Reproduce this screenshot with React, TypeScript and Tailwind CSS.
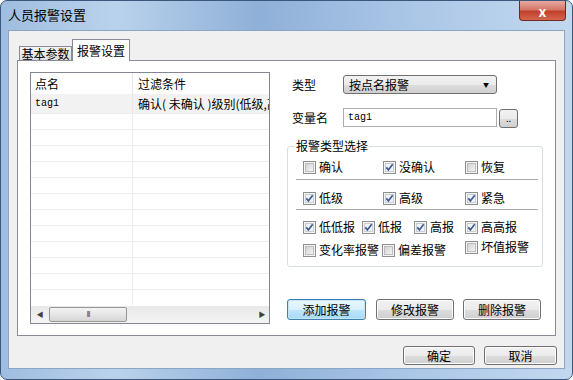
import React from 'react';

const Check = ({ checked }: { checked?: boolean }) => (
  <svg width="13" height="13" viewBox="0 0 13 13" className="shrink-0">
    <defs>
      <linearGradient id="cbIn" x1="0" y1="0" x2="1" y2="1">
        <stop offset="0" stopColor="#cfcfcf" />
        <stop offset="1" stopColor="#f7f7f7" />
      </linearGradient>
    </defs>
    <rect x="0.5" y="0.5" width="12" height="12" fill="#f4f4f4" stroke="#8e8f8f" />
    {checked ? (
      <>
        <rect x="2.5" y="2.5" width="8" height="8" fill="#f2f4f8" stroke="#c9ced6" />
        <path d="M3.3 6.4l2.1 2.5 4.3-5.6" fill="none" stroke="#3c5a96" strokeWidth="1.7" />
      </>
    ) : (
      <rect x="2.5" y="2.5" width="8" height="8" fill="url(#cbIn)" stroke="#bdbdbd" />
    )}
  </svg>
);

const Opt = ({ label, checked, w }: { label: string; checked?: boolean; w: string }) => (
  <div className={`flex items-center gap-[3px] ${w}`}>
    <Check checked={checked} />
    <span className="leading-none">{label}</span>
  </div>
);

const Btn = ({ label, cls, focus }: { label: string; cls: string; focus?: boolean }) => (
  <div
    className={`flex items-center justify-center rounded-[3px] border text-[12px] leading-none ${cls} ${
      focus
        ? 'border-[#3c7fb1] bg-[linear-gradient(to_bottom,#eaf6fd,#d9f0fc_50%,#bee6fd_51%,#a7d9f5)] shadow-[inset_0_0_0_1px_#c4e5f6]'
        : 'border-[#707070] bg-[linear-gradient(to_bottom,#f2f2f2,#ebebeb_50%,#dddddd_51%,#cfcfcf)] shadow-[inset_0_0_0_1px_#fcfcfc]'
    }`}
  >
    {label}
  </div>
);

export default function App() {
  const rows = Array.from({ length: 12 });

  return (
    <div className="w-[573px] h-[380px] overflow-hidden bg-white font-['Noto_Sans_CJK_SC',sans-serif] text-[12px] text-black">
      <div className="flex h-full w-full flex-col rounded-[7px] border border-[#3b587c] bg-[linear-gradient(to_right,#9fbde0,#bad2ec_20%,#8fb0d8_45%,#a9c5e6_70%,#c2d8ef)]">
        {/* title bar */}
        <div className="flex h-[29px] items-start justify-between pl-[7px]">
          <span className="mt-[6px] text-[13px] leading-[16px] text-black">人员报警设置</span>
          <div className="mr-[6px] flex h-[20px] w-[47px] items-center justify-center rounded-b-[4px] border border-t-0 border-[#6b2a22] bg-[linear-gradient(to_bottom,#e6a99f,#d47767_45%,#c2412b_55%,#d5664f)] text-[14px] font-bold leading-none text-white">
            x
          </div>
        </div>

        {/* client */}
        <div className="mx-[7px] flex h-[339px] flex-col border border-[#8ba5c4] bg-[#f0f0f0] pl-[8px] pr-[7px]">
          {/* tabs */}
          <div className="mt-[7px] flex h-[22px] items-end pl-[2px]">
            <div className="flex h-[14px] w-[53px] items-center justify-center border border-b-0 border-[#898c95] bg-[linear-gradient(to_bottom,#f3f3f3,#e0e0e0)] leading-none">
              基本参数
            </div>
            <div className="relative z-10 -mb-px flex h-[22px] w-[58px] items-center justify-center border border-b-0 border-[#898c95] bg-white leading-none">
              报警设置
            </div>
          </div>

          {/* panel */}
          <div className="flex h-[276px] w-[539px] border border-[#898c95] bg-white pl-[12px] pt-[11px]">
            {/* list view */}
            <div className="flex h-[252px] w-[240px] flex-col overflow-hidden border border-[#828790]">
              <div className="flex h-[21px] shrink-0 bg-white">
                <div className="flex w-[102px] items-center border-r border-[#e5e5e5] pl-[4px]">点名</div>
                <div className="flex flex-1 items-center pl-[5px]">过滤条件</div>
              </div>
              <div className="flex-1 overflow-hidden">
                <div className="flex h-[19px] bg-[#f2f2f2]">
                  <div className="flex w-[102px] items-center border-r border-[#e8e8e8] pl-[4px] font-['Liberation_Mono',monospace] text-[10px]">
                    tag1
                  </div>
                  <div className="flex flex-1 items-center overflow-hidden whitespace-nowrap pl-[5px]">
                    确认( 未确认 )级别(低级,高级,紧急)
                  </div>
                </div>
                {rows.map((_, i) => (
                  <div key={i} className="flex h-[16px] border-t border-[#ededed]">
                    <div className="w-[102px] border-r border-[#ededed]" />
                    <div className="flex-1" />
                  </div>
                ))}
              </div>
              {/* horizontal scrollbar */}
              <div className="flex h-[17px] shrink-0 items-center bg-[linear-gradient(to_bottom,#e8e8e8,#f4f4f4)]">
                <div className="flex w-[18px] items-center justify-center text-[7px] text-[#404040]">◀</div>
                <div className="flex h-[15px] w-[78px] items-center justify-center rounded-[2px] border border-[#979797] bg-[linear-gradient(to_bottom,#f3f3f3,#e6e6e6_50%,#d6d6d6)] text-[7px] tracking-[-1px] text-[#4a4a4a]">
                  III
                </div>
                <div className="flex-1" />
                <div className="flex w-[14px] items-center justify-center text-[7px] text-[#404040]">▶</div>
              </div>
            </div>

            {/* right column */}
            <div className="ml-[17px] flex w-[256px] flex-col">
              <div className="mt-[3px] flex h-[19px] items-center">
                <span className="w-[56px] pl-[5px] leading-none">类型</span>
                <div className="flex h-[19px] w-[154px] items-center justify-between rounded-[3px] border border-[#707070] bg-[linear-gradient(to_bottom,#f2f2f2,#ebebeb_50%,#dddddd_51%,#cfcfcf)] pl-[5px] pr-[7px] leading-none">
                  <span>按点名报警</span>
                  <span className="text-[6px]">▼</span>
                </div>
              </div>

              <div className="mt-[14px] flex h-[19px] items-center">
                <span className="w-[56px] pl-[5px] leading-none">变量名</span>
                <div className="flex h-[19px] w-[154px] items-center border border-[#abadb3] bg-white pl-[4px] font-['Liberation_Mono',monospace] text-[10px]">
                  tag1
                </div>
                <div className="ml-[2px] mt-[2px] flex h-[19px] w-[19px] items-center justify-center rounded-[3px] border border-[#707070] bg-[linear-gradient(to_bottom,#f2f2f2,#ebebeb_50%,#dddddd_51%,#cfcfcf)] text-[9px] leading-none">
                  ..
                </div>
              </div>

              <fieldset className="mt-[11px] h-[129px] rounded-[3px] border border-[#d5dfe5] pl-[15px]">
                <legend className="-ml-[8px] px-[1px] leading-[16px]">报警类型选择</legend>
                <div className="mt-[3px] flex h-[20px] items-center">
                  <Opt label="确认" w="w-[80px]" />
                  <Opt label="没确认" checked w="w-[82px]" />
                  <Opt label="恢复" w="w-[70px]" />
                </div>
                <div className="-ml-[7px] mt-[2px] h-px w-[242px] bg-[#a9a9a9]" />
                <div className="mt-[8px] flex h-[20px] items-center">
                  <Opt label="低级" checked w="w-[80px]" />
                  <Opt label="高级" checked w="w-[82px]" />
                  <Opt label="紧急" checked w="w-[70px]" />
                </div>
                <div className="-ml-[7px] mt-px h-px w-[242px] bg-[#a9a9a9]" />
                <div className="mt-[7px] flex h-[20px] items-center">
                  <Opt label="低低报" checked w="w-[59px]" />
                  <Opt label="低报" checked w="w-[52px]" />
                  <Opt label="高报" checked w="w-[51px]" />
                  <Opt label="高高报" checked w="w-[70px]" />
                </div>
                <div className="mt-[3px] flex h-[20px] items-center">
                  <Opt label="变化率报警" w="w-[79px]" />
                  <Opt label="偏差报警" w="w-[83px]" />
                  <div className="-mt-[6px]">
                    <Opt label="坏值报警" w="w-[70px]" />
                  </div>
                </div>
              </fieldset>

              <div className="mt-[32px] flex h-[21px]">
                <Btn label="添加报警" cls="w-[79px]" focus />
                <Btn label="修改报警" cls="ml-[10px] w-[78px]" />
                <Btn label="删除报警" cls="ml-[9px] w-[78px]" />
              </div>
            </div>
          </div>

          {/* dialog buttons */}
          <div className="mt-[10px] flex justify-end gap-[9px]">
            <Btn label="确定" cls="h-[19px] w-[72px]" />
            <Btn label="取消" cls="h-[19px] w-[73px]" />
          </div>
        </div>
      </div>
    </div>
  );
}
